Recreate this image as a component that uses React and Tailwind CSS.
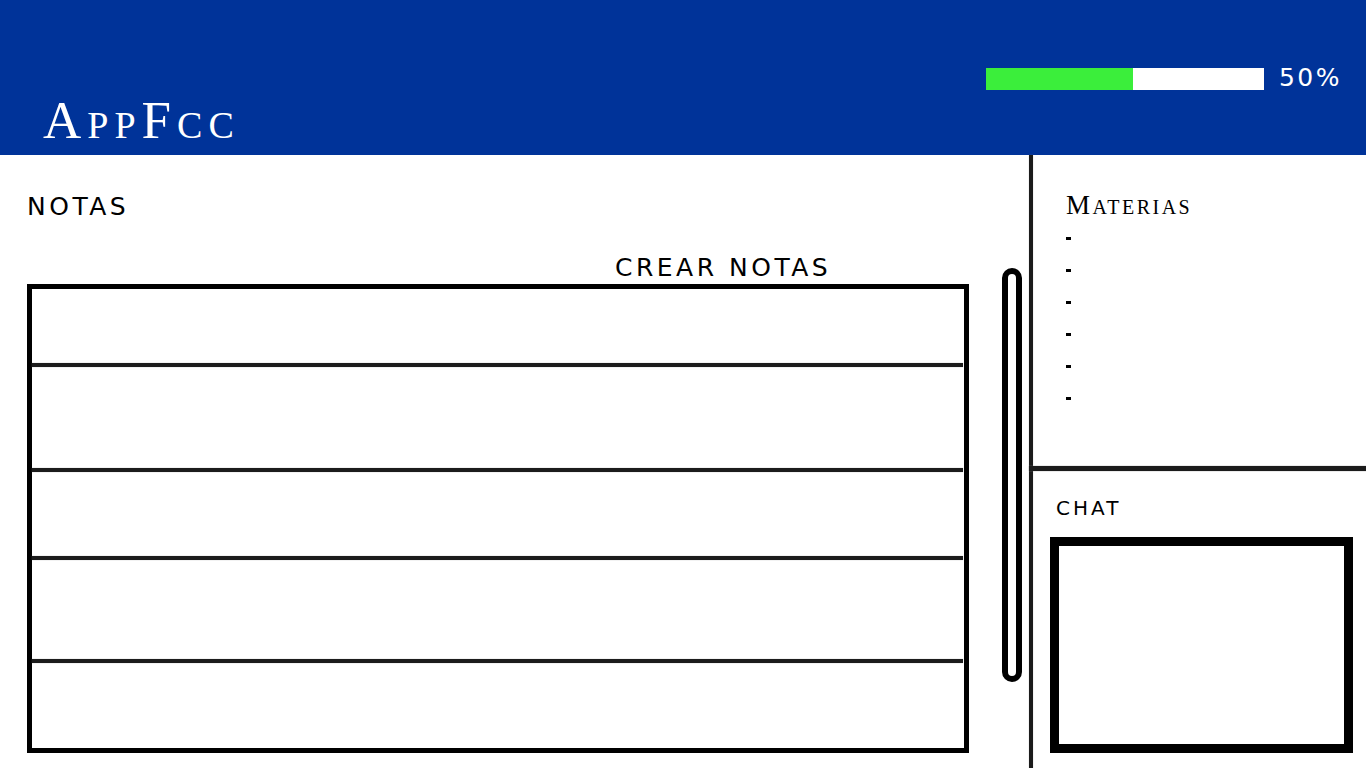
import React from "react";

const sans = { fontFamily: '"DejaVu Sans", "Liberation Sans", sans-serif' };
const serif = { fontFamily: '"Liberation Serif", "DejaVu Serif", serif' };

export default function App() {
  const rows = [74, 101, 84, 99, 85];
  return (
    <div className="w-[1366px] h-[768px] overflow-hidden bg-white flex flex-col">
      {/* Header */}
      <header className="h-[155px] shrink-0 bg-[#003399] flex justify-between">
        <div className="pl-[43px] pt-[94px]">
          <h1 className="leading-none text-white tracking-[6px] flex items-baseline" style={serif}>
            <span className="text-[53px]">A</span>
            <span className="text-[38px]">PP</span>
            <span className="text-[53px]">F</span>
            <span className="text-[38px]">CC</span>
          </h1>
        </div>
        <div className="pt-[68px] pr-[24px] flex items-start gap-[15px]">
          <div className="w-[278px] h-[22px] bg-white flex">
            <div className="w-[147px] h-full bg-[#3bee3b]" />
          </div>
          <span className="text-[25px] leading-none text-white tracking-[2.5px] -mt-[3px]" style={sans}>
            50%
          </span>
        </div>
      </header>

      {/* Body */}
      <div className="flex flex-1 min-h-0">
        {/* Left: notas */}
        <section className="w-[1029px] shrink-0 flex pl-[27px]">
          <div className="w-[942px] shrink-0 flex flex-col">
            <h2 className="mt-[39px] text-[25px] leading-none text-black tracking-[3.5px]" style={sans}>
              NOTAS
            </h2>
            <div className="mt-[36px] ml-[588px] text-[25px] leading-none text-black tracking-[3.5px] whitespace-nowrap" style={sans}>
              CREAR NOTAS
            </div>
            <div className="mt-[4px] h-[469px] border-[5px] border-black flex flex-col">
              {rows.map((h, i) => (
                <React.Fragment key={i}>
                  <div style={{ height: h }} className="shrink-0" />
                  {i < rows.length - 1 && (
                    <div className="h-[4px] shrink-0 mr-[1px] bg-[#1c1c1c] shadow-[0_0_1px_#777]" />
                  )}
                </React.Fragment>
              ))}
            </div>
          </div>
          <div className="ml-[33px] mt-[113px]">
            <div className="w-[20px] h-[414px] border-[6px] border-black rounded-full" />
          </div>
        </section>

        {/* Vertical divider */}
        <div className="w-[4px] shrink-0 bg-[#1b1b1b] shadow-[0_0_1px_#888]" />

        {/* Right column */}
        <aside className="flex-1 flex flex-col">
          <div className="h-[311px] shrink-0 pl-[33px] pt-[37px]">
            <h3 className="leading-none text-black tracking-[2.5px] flex items-baseline" style={serif}>
              <span className="text-[27px]">M</span>
              <span className="text-[20px]">ATERIAS</span>
            </h3>
            <ul className="mt-[3px]">
              {[0, 1, 2, 3, 4, 5].map((i) => (
                <li key={i} className="h-[32px] flex items-center">
                  <span className="block w-[5px] h-[3px] bg-black" />
                </li>
              ))}
            </ul>
          </div>
          <div className="h-[5px] -ml-[4px] shrink-0 bg-[#1b1b1b] shadow-[0_0_1px_#888]" />
          <div className="pl-[23px] pt-[27px]">
            <h3 className="text-[20px] leading-none text-black tracking-[3px]" style={sans}>
              CHAT
            </h3>
          </div>
          <div className="ml-[17px] mt-[19px] w-[303px] h-[216px] border-[9px] border-black" />
        </aside>
      </div>
    </div>
  );
}
